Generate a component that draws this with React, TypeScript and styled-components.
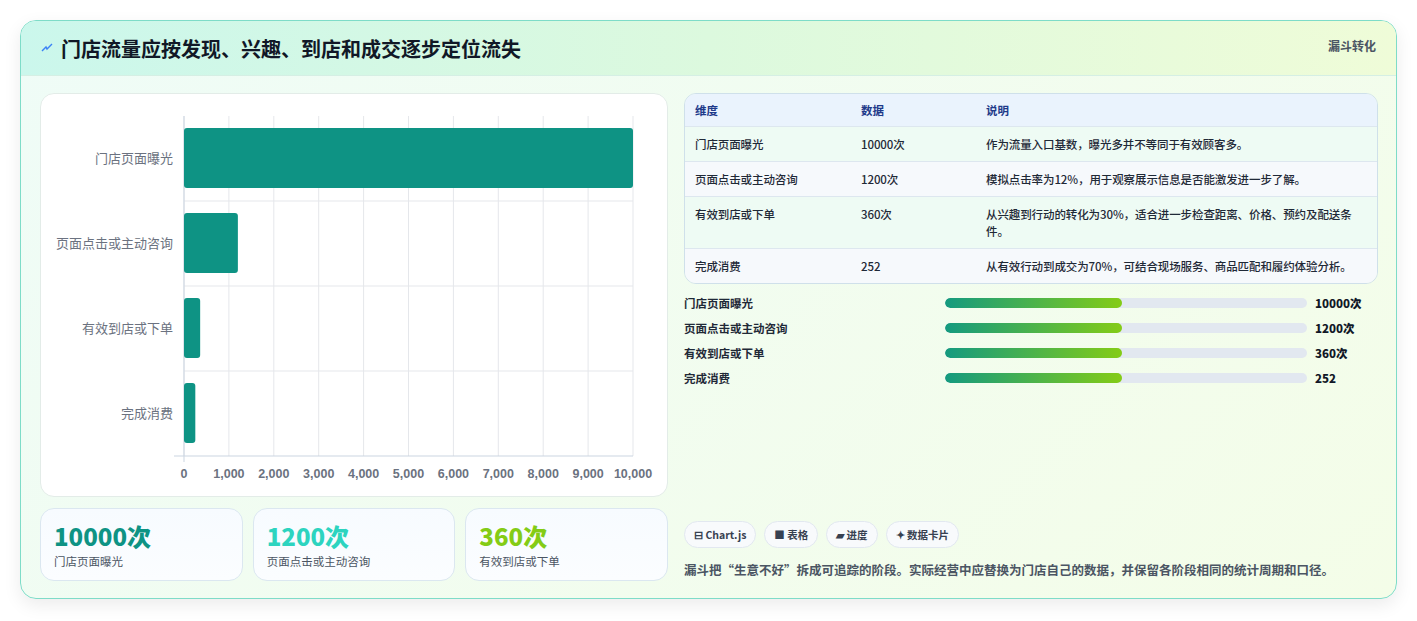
import React from 'react';
import styled, { createGlobalStyle } from 'styled-components';

const GlobalStyle = createGlobalStyle`
  body { margin: 0; background: #f3f4f6; font-family: "Noto Sans CJK SC", "Noto Sans", sans-serif; }
`;

const stages = [
  { name: '门店页面曝光', value: 10000, label: '10000次', note: '作为流量入口基数，曝光多并不等同于有效顾客多。' },
  { name: '页面点击或主动咨询', value: 1200, label: '1200次', note: '模拟点击率为12%，用于观察展示信息是否能激发进一步了解。' },
  { name: '有效到店或下单', value: 360, label: '360次', note: '从兴趣到行动的转化为30%，适合进一步检查距离、价格、预约及配送条件。' },
  { name: '完成消费', value: 252, label: '252', note: '从有效行动到成交为70%，可结合现场服务、商品匹配和履约体验分析。' },
];

const Page = styled.div`
  padding: 20px;
  background: #fff;
  height: 621px;
  box-sizing: border-box;
`;

const Card = styled.div`
  border: 1px solid #7edcc8;
  border-radius: 16px;
  overflow: hidden;
  background: linear-gradient(135deg, #effcf7 0%, #f4fde8 100%);
  box-shadow: 0 6px 18px rgba(0, 0, 0, 0.08);
  height: 579px;
  box-sizing: border-box;
`;

const Header = styled.div`
  height: 55px;
  display: flex;
  align-items: center;
  justify-content: space-between;
  padding: 0 20px;
  background: linear-gradient(90deg, #cbf7ec 0%, #dcf9de 50%, #effcd8 100%);
  border-bottom: 1px solid #d5efe4;
  box-sizing: border-box;
`;

const Title = styled.h1`
  margin: 0;
  font-size: 20px;
  font-weight: 700;
  color: #111827;
  display: flex;
  align-items: center;
  gap: 8px;
`;

const Tag = styled.span`
  align-self: flex-start;
  margin-top: 16px;
  font-size: 12px;
  font-weight: 700;
  color: #4b5563;
`;

const Body = styled.div`
  display: grid;
  grid-template-columns: 628px 1fr;
  gap: 16px;
  padding: 17px 18px 0 19px;
`;

const Left = styled.div`
  display: flex;
  flex-direction: column;
  gap: 11px;
`;

const ChartBox = styled.div`
  height: 404px;
  background: #fff;
  border: 1px solid #e3ece8;
  border-radius: 14px;
  box-sizing: border-box;
`;

const Stats = styled.div`
  display: grid;
  grid-template-columns: repeat(3, 1fr);
  gap: 10px;
`;

const Stat = styled.div`
  height: 73px;
  border: 1px solid #dbe7f0;
  border-radius: 14px;
  background: linear-gradient(180deg, #f7fbff, #fbfdff);
  padding: 10px 13px;
  box-sizing: border-box;
`;

const StatValue = styled.div<{ $color: string }>`
  font-size: 24px;
  font-weight: 800;
  line-height: 34px;
  color: ${(p) => p.$color};
`;

const StatLabel = styled.div`
  font-size: 11.5px;
  color: #4b5563;
`;

const Right = styled.div`
  display: flex;
  flex-direction: column;
`;

const Table = styled.div`
  border: 1px solid #cfe0ea;
  border-radius: 12px;
  overflow: hidden;
  font-size: 11.5px;
`;

const Row = styled.div<{ $head?: boolean; $alt?: boolean }>`
  display: grid;
  grid-template-columns: 166px 125px 1fr;
  padding: ${(p) => (p.$head ? '8px 10px 7px' : '9px 10px 8px')};
  box-sizing: border-box;
  align-items: start;
  line-height: 17px;
  letter-spacing: -0.1px;
  background: ${(p) => (p.$head ? '#eaf3fd' : p.$alt ? '#f6f9fc' : '#eefbf4')};
  color: ${(p) => (p.$head ? '#1e3a8a' : '#1f2937')};
  font-weight: ${(p) => (p.$head ? 700 : 500)};
  & + & { border-top: 1px solid #dde7ef; }
`;

const Bars = styled.div`
  display: flex;
  flex-direction: column;
  gap: 7px;
  margin-top: 10px;
`;

const BarRow = styled.div`
  display: grid;
  grid-template-columns: 253px 362px 1fr;
  align-items: center;
  column-gap: 8px;
  font-size: 11.5px;
  font-weight: 600;
  color: #1f2937;
  height: 18px;
`;

const Track = styled.div`
  height: 10px;
  border-radius: 5px;
  background: #e2e8f0;
  overflow: hidden;
`;

const Fill = styled.div`
  height: 100%;
  border-radius: 5px;
  background: linear-gradient(90deg, #149a7f, #84cc16);
`;

const Value = styled.span`
  font-weight: 800;
  color: #111827;
`;

const Chips = styled.div`
  display: flex;
  gap: 8px;
  margin-top: 134px;
`;

const Chip = styled.span`
  font-size: 10.5px;
  font-weight: 700;
  color: #374151;
  border: 1px solid #e2e8f0;
  background: #f8fafc;
  border-radius: 14px;
  padding: 5px 9px;
`;

const Note = styled.p`
  margin: 12px 0 0;
  font-size: 12.5px;
  font-weight: 600;
  color: #4b5563;
`;

const FunnelChart: React.FC = () => {
  const x0 = 143, w = 449, top = 22, rowH = 85, max = 10000;
  const ticks = Array.from({ length: 11 }, (_, i) => i * 1000);
  return (
    <svg width="626" height="402" style={{ display: 'block' }}>
      {ticks.map((t) => {
        const x = x0 + (t / max) * w;
        return <line key={t} x1={x} x2={x} y1={top} y2={top + rowH * 4} stroke="#e5e7eb" />;
      })}
      {[1, 2, 3].map((i) => (
        <line key={i} x1={x0} x2={x0 + w} y1={top + i * rowH} y2={top + i * rowH} stroke="#e5e7eb" />
      ))}
      <line x1={x0 - 10} x2={x0 + w} y1={top + rowH * 4} y2={top + rowH * 4} stroke="#cbd5e1" />
      <line x1={x0} x2={x0} y1={top} y2={top + rowH * 4 + 6} stroke="#cbd5e1" />
      {stages.map((s, i) => (
        <g key={s.name}>
          <rect x={x0} y={top + i * rowH + 12} width={Math.max((s.value / max) * w, 10)} height={60} rx="3" fill="#0e9384" />
          <text x={x0 - 11} y={top + i * rowH + 47} textAnchor="end" fontSize="13" fill="#6b7280" fontFamily="Noto Sans CJK SC, sans-serif">{s.name}</text>
        </g>
      ))}
      {ticks.map((t) => (
        <text key={t} x={x0 + (t / max) * w} y={top + rowH * 4 + 22} textAnchor="middle" fontSize="12.5" fontWeight="700" fill="#6b7280" fontFamily="Liberation Sans, sans-serif">{t.toLocaleString('en-US')}</text>
      ))}
    </svg>
  );
};

export default function App() {
  return (
    <Page>
      <GlobalStyle />
      <Card>
        <Header>
          <Title>
            <svg width="12" height="12" viewBox="0 0 12 12"><path d="M1 9 L5 5 L6 7 L11 2" stroke="#3b82f6" strokeWidth="1.4" fill="none" /></svg>
            门店流量应按发现、兴趣、到店和成交逐步定位流失
          </Title>
          <Tag>漏斗转化</Tag>
        </Header>
        <Body>
          <Left>
            <ChartBox><FunnelChart /></ChartBox>
            <Stats>
              <Stat><StatValue $color="#0e9384">10000次</StatValue><StatLabel>门店页面曝光</StatLabel></Stat>
              <Stat><StatValue $color="#2dd4bf">1200次</StatValue><StatLabel>页面点击或主动咨询</StatLabel></Stat>
              <Stat><StatValue $color="#84cc16">360次</StatValue><StatLabel>有效到店或下单</StatLabel></Stat>
            </Stats>
          </Left>
          <Right>
            <Table>
              <Row $head><span>维度</span><span>数据</span><span>说明</span></Row>
              {stages.map((s, i) => (
                <Row key={s.name} $alt={i % 2 === 1}><span>{s.name}</span><span>{s.label}</span><span>{s.note}</span></Row>
              ))}
            </Table>
            <Bars>
              {stages.map((s) => (
                <BarRow key={s.name}>
                  <span>{s.name}</span>
                  <Track><Fill style={{ width: '49%' }} /></Track>
                  <Value>{s.label}</Value>
                </BarRow>
              ))}
            </Bars>
            <Chips>
              <Chip>⊟ Chart.js</Chip>
              <Chip>■ 表格</Chip>
              <Chip>▰ 进度</Chip>
              <Chip>✦ 数据卡片</Chip>
            </Chips>
            <Note>漏斗把“生意不好”拆成可追踪的阶段。实际经营中应替换为门店自己的数据，并保留各阶段相同的统计周期和口径。</Note>
          </Right>
        </Body>
      </Card>
    </Page>
  );
}
